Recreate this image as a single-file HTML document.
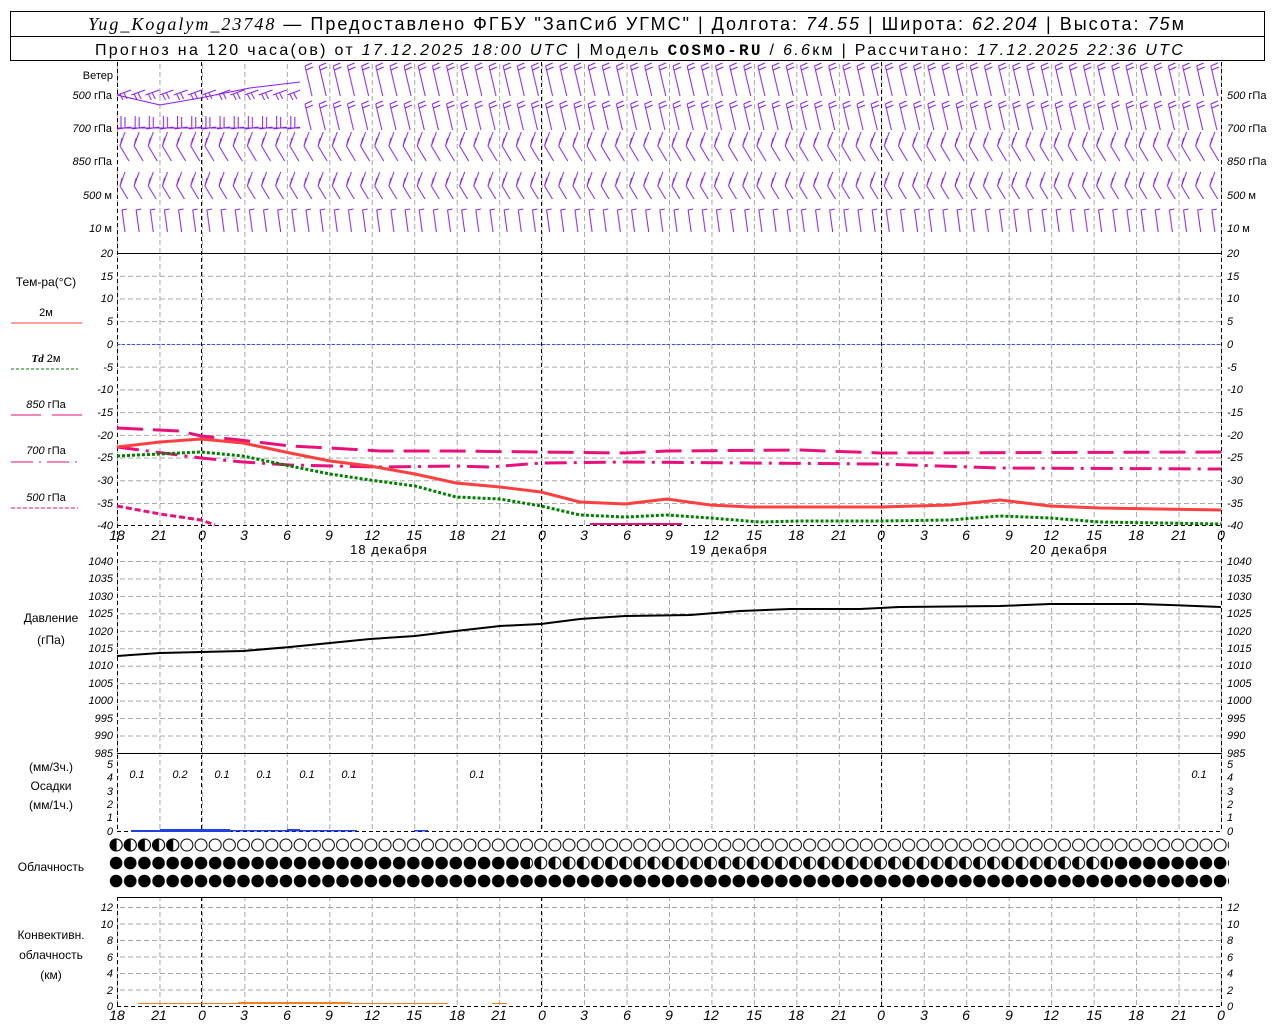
<!DOCTYPE html>
<html><head><meta charset="utf-8"><style>
html,body{margin:0;padding:0;background:#fff;width:1280px;height:1024px;overflow:hidden}
svg{display:block;font-family:"Liberation Sans",sans-serif}
.t{font-size:11px}
.i{font-style:italic;font-size:11px}
</style></head><body>
<svg width="1280" height="1024" viewBox="0 0 1280 1024" xmlns="http://www.w3.org/2000/svg">
<defs>
<pattern id="vg" x="117" y="0" width="42.4615" height="1024" patternUnits="userSpaceOnUse">
<line x1="0.5" y1="0" x2="0.5" y2="1024" stroke="#a8a8a8" stroke-width="1" stroke-dasharray="5 3"/></pattern>
<pattern id="hT" x="0" y="253" width="1280" height="22.73" patternUnits="userSpaceOnUse">
<line x1="0" y1="0.5" x2="1280" y2="0.5" stroke="#a8a8a8" stroke-dasharray="5 3"/></pattern>
<pattern id="hP" x="0" y="561" width="1280" height="17.45" patternUnits="userSpaceOnUse">
<line x1="0" y1="0.5" x2="1280" y2="0.5" stroke="#a8a8a8" stroke-dasharray="5 3"/></pattern>
<pattern id="hC" x="0" y="907" width="1280" height="16.5" patternUnits="userSpaceOnUse">
<line x1="0" y1="0.5" x2="1280" y2="0.5" stroke="#a8a8a8" stroke-dasharray="5 3"/></pattern>
<pattern id="cf" x="109" y="-15" width="14.154" height="30" patternUnits="userSpaceOnUse">
<circle cx="7.1" cy="15" r="6.3" fill="#000"/></pattern>
<pattern id="co" x="109" y="-15" width="14.154" height="30" patternUnits="userSpaceOnUse">
<circle cx="7.1" cy="15" r="6" fill="#fff" stroke="#000" stroke-width="1"/></pattern>
<pattern id="ch" x="109" y="-15" width="14.154" height="30" patternUnits="userSpaceOnUse">
<circle cx="7.1" cy="15" r="6" fill="#fff" stroke="#000" stroke-width="1"/><path d="M7.1 9 A6 6 0 0 0 7.1 21Z" fill="#000"/><line x1="7.1" y1="9" x2="7.1" y2="21" stroke="#000"/></pattern>
<pattern id="bA" x="117" y="62" width="14.154" height="40" patternUnits="userSpaceOnUse">
<g stroke="#8a1cf0" stroke-width="1" fill="none"><path d="M11 34 L4 4 M4 4 L11 1 M5 8 L12 5"/></g></pattern>
<pattern id="bB" x="117" y="128" width="14.154" height="40" patternUnits="userSpaceOnUse">
<g stroke="#8a1cf0" stroke-width="1" fill="none"><path d="M12 33 L3 18 L8 4 M3 18 L5 10"/></g></pattern>
<pattern id="bC" x="117" y="92" width="14.154" height="40" patternUnits="userSpaceOnUse">
<g stroke="#8a1cf0" stroke-width="1" fill="none"><path d="M1 37 L14 35 M4 36 L4 24 M8 36 L8 25"/></g></pattern>
<pattern id="bE" x="117" y="60" width="14.154" height="40" patternUnits="userSpaceOnUse">
<g stroke="#8a1cf0" stroke-width="1" fill="none"><path d="M0 35 L14 30 M3 34 L6 40 M7 33 L10 39"/></g></pattern>
<pattern id="bD" x="117" y="196" width="14.154" height="40" patternUnits="userSpaceOnUse">
<g stroke="#8a1cf0" stroke-width="1" fill="none"><path d="M8 36 L5 14 L10 13"/></g></pattern>
</defs>

<!-- header -->
<rect x="10.5" y="11.5" width="1254" height="49" fill="none" stroke="#000"/>
<line x1="10" y1="36.5" x2="1265" y2="36.5" stroke="#000"/>
<text x="637" y="30" text-anchor="middle" font-size="18" letter-spacing="2"><tspan font-family="Liberation Serif" font-style="italic">Yug_Kogalym_23748</tspan> — Предоставлено ФГБУ "ЗапСиб УГМС" | Долгота: <tspan font-style="italic">74.55</tspan> | Широта: <tspan font-style="italic">62.204</tspan> | Высота: <tspan font-style="italic">75</tspan>м</text>
<text x="640" y="55" text-anchor="middle" font-size="16" letter-spacing="2.3">Прогноз на 120 часа(ов) от <tspan font-style="italic">17.12.2025 18:00 UTC</tspan>  | Модель <tspan font-weight="bold" font-family="Liberation Mono">COSMO-RU</tspan> / <tspan font-style="italic">6.6</tspan>км | Рассчитано: <tspan font-style="italic">17.12.2025 22:36 UTC</tspan></text>

<!-- grids -->
<rect x="117" y="62" width="1105" height="191" fill="url(#vg)"/>
<rect x="117" y="253" width="1105" height="272" fill="url(#vg)"/>
<rect x="117" y="253" width="1105" height="272" fill="url(#hT)"/>
<rect x="117" y="561" width="1105" height="192" fill="url(#vg)"/>
<rect x="117" y="561" width="1105" height="192" fill="url(#hP)"/>
<rect x="117" y="753" width="1105" height="78" fill="url(#vg)"/>
<rect x="117" y="897" width="1105" height="109" fill="url(#vg)"/>
<rect x="117" y="907" width="1105" height="99" fill="url(#hC)"/>
<g stroke="#000" stroke-dasharray="4 3">
<line x1="117.5" y1="62" x2="117.5" y2="831"/><line x1="1221.5" y1="62" x2="1221.5" y2="831"/>
<line x1="117.5" y1="897" x2="117.5" y2="1006"/><line x1="1221.5" y1="897" x2="1221.5" y2="1006"/>
<line x1="201.5" y1="62" x2="201.5" y2="831"/><line x1="541.5" y1="62" x2="541.5" y2="831"/><line x1="881.5" y1="62" x2="881.5" y2="831"/>
<line x1="201.5" y1="897" x2="201.5" y2="1006"/><line x1="541.5" y1="897" x2="541.5" y2="1006"/><line x1="881.5" y1="897" x2="881.5" y2="1006"/>
<line x1="117" y1="525.5" x2="1222" y2="525.5"/><line x1="117" y1="831.5" x2="1222" y2="831.5"/><line x1="117" y1="1006.5" x2="1222" y2="1006.5"/>
</g>
<g stroke="#000"><line x1="117" y1="253.5" x2="1222" y2="253.5"/><line x1="117" y1="753.5" x2="1222" y2="753.5"/><line x1="117" y1="897.5" x2="1222" y2="897.5"/></g>
<line x1="117" y1="344.5" x2="1222" y2="344.5" stroke="#3050ff" stroke-dasharray="3 2"/>

<!-- wind -->
<g font-size="11" text-anchor="end">
<text x="113" y="79">Ветер</text>
<text x="112" y="99"><tspan font-style="italic">500</tspan> гПа</text>
<text x="112" y="132"><tspan font-style="italic">700</tspan> гПа</text>
<text x="112" y="165"><tspan font-style="italic">850</tspan> гПа</text>
<text x="112" y="199"><tspan font-style="italic">500</tspan> м</text>
<text x="112" y="232"><tspan font-style="italic">10</tspan>   м</text>
</g>
<g font-size="11">
<text x="1227" y="99"><tspan font-style="italic">500</tspan> гПа</text>
<text x="1227" y="132"><tspan font-style="italic">700</tspan> гПа</text>
<text x="1227" y="165"><tspan font-style="italic">850</tspan> гПа</text>
<text x="1227" y="199"><tspan font-style="italic">500</tspan> м</text>
<text x="1227" y="232"><tspan font-style="italic">10</tspan>   м</text>
</g>
<rect x="300" y="62" width="922" height="36" fill="url(#bA)"/>
<rect x="300" y="96" width="922" height="36" fill="url(#bA)" transform="translate(0,-2)"/>
<rect x="117" y="80" width="183" height="22" fill="url(#bE)"/>
<rect x="117" y="94" width="183" height="38" fill="url(#bC)"/>
<rect x="117" y="128" width="1105" height="37" fill="url(#bB)"/>
<rect x="117" y="162" width="1105" height="37" fill="url(#bB)"/>
<rect x="117" y="196" width="1105" height="36" fill="url(#bD)"/>
<polyline points="117,95 160,105 200,98 250,88 300,82" fill="none" stroke="#8a1cf0"/>
<polyline points="117,128 300,128" fill="none" stroke="#8a1cf0"/>

<!-- temp labels -->
<g class="i" text-anchor="end">
<text x="113" y="257">20</text><text x="113" y="280">15</text><text x="113" y="302">10</text><text x="113" y="325">5</text><text x="113" y="348">0</text><text x="113" y="371">-5</text><text x="113" y="393">-10</text><text x="113" y="416">-15</text><text x="113" y="439">-20</text><text x="113" y="461">-25</text><text x="113" y="484">-30</text><text x="113" y="507">-35</text><text x="113" y="529">-40</text>
</g>
<g class="i">
<text x="1227" y="257">20</text><text x="1227" y="280">15</text><text x="1227" y="302">10</text><text x="1227" y="325">5</text><text x="1227" y="348">0</text><text x="1227" y="371">-5</text><text x="1227" y="393">-10</text><text x="1227" y="416">-15</text><text x="1227" y="439">-20</text><text x="1227" y="461">-25</text><text x="1227" y="484">-30</text><text x="1227" y="507">-35</text><text x="1227" y="529">-40</text>
</g>
<g font-size="11" text-anchor="middle">
<text x="46" y="286" font-size="12">Тем-ра(°С)</text>
<text x="46" y="316">2м</text>
<text x="46" y="362"><tspan font-style="italic" font-weight="bold" font-family="Liberation Serif">Td</tspan>  2м</text>
<text x="46" y="408"><tspan font-style="italic">850</tspan> гПа</text>
<text x="46" y="454"><tspan font-style="italic">700</tspan> гПа</text>
<text x="46" y="501"><tspan font-style="italic">500</tspan> гПа</text>
</g>
<line x1="11" y1="323" x2="82" y2="323" stroke="#ff4040"/>
<line x1="11" y1="369" x2="78" y2="369" stroke="#008000" stroke-dasharray="3 2"/>
<line x1="11" y1="415" x2="82" y2="415" stroke="#e0107a" stroke-dasharray="30 11"/>
<line x1="11" y1="462" x2="78" y2="462" stroke="#e0107a" stroke-dasharray="22 6 2 6"/>
<line x1="11" y1="508" x2="78" y2="508" stroke="#e0107a" stroke-dasharray="4 2"/>

<g fill="none">
<polyline points="117,428 180,431 201,436 240,440 290,446 330,448 380,451 450,451 541,452 625,453 667,451 800,450 880,453 1221,452" stroke="#e8107a" stroke-width="3" stroke-dasharray="26 10"/>
<polyline points="117,447 201,458 243,462 290,465 380,467 456,466 490,467 541,463 625,462 880,464 1000,468 1221,469" stroke="#e8107a" stroke-width="3" stroke-dasharray="22 7 3 7"/>
<polyline points="117,506 160,514 201,520 215,525" stroke="#e8107a" stroke-width="3" stroke-dasharray="6 3"/>
<line x1="590" y1="524" x2="682" y2="524" stroke="#e8107a" stroke-width="2"/>
<polyline points="117,456 201,452 243,456 290,466 330,474 370,480 415,486 456,497 500,499 541,506 580,515 625,517 667,515 710,518 760,522 800,521 880,521 950,520 1000,516 1050,518 1100,522 1221,524" stroke="#008000" stroke-width="3" stroke-dasharray="3 2"/>
<polyline points="117,447 160,442 201,439 243,443 290,453 330,461 370,466 415,474 456,483 500,487 541,492 580,502 625,504 667,499 710,505 750,507 880,507 950,505 1000,500 1050,506 1100,508 1221,510" stroke="#ff4040" stroke-width="3"/>
</g>

<!-- hour labels -->
<g id="hl" font-size="14" font-style="italic" text-anchor="middle">
<text x="117" y="540">18</text><text x="159" y="540">21</text><text x="202" y="540">0</text><text x="244" y="540">3</text><text x="287" y="540">6</text><text x="329" y="540">9</text><text x="372" y="540">12</text><text x="414" y="540">15</text><text x="457" y="540">18</text><text x="499" y="540">21</text><text x="542" y="540">0</text><text x="584" y="540">3</text><text x="627" y="540">6</text><text x="669" y="540">9</text><text x="711" y="540">12</text><text x="754" y="540">15</text><text x="796" y="540">18</text><text x="839" y="540">21</text><text x="881" y="540">0</text><text x="924" y="540">3</text><text x="966" y="540">6</text><text x="1009" y="540">9</text><text x="1051" y="540">12</text><text x="1094" y="540">15</text><text x="1136" y="540">18</text><text x="1179" y="540">21</text><text x="1221" y="540">0</text>
</g>
<use href="#hl" y="480"/>
<g font-size="13" text-anchor="middle" letter-spacing="1">
<text x="389" y="554">18 декабря</text><text x="729" y="554">19 декабря</text><text x="1069" y="554">20 декабря</text>
</g>

<!-- pressure -->
<g class="i" text-anchor="end" font-size="10">
<text x="113" y="565">1040</text><text x="113" y="582">1035</text><text x="113" y="600">1030</text><text x="113" y="617">1025</text><text x="113" y="635">1020</text><text x="113" y="652">1015</text><text x="113" y="669">1010</text><text x="113" y="687">1005</text><text x="113" y="704">1000</text><text x="113" y="722">995</text><text x="113" y="739">990</text><text x="113" y="757">985</text>
</g>
<g class="i" font-size="10">
<text x="1227" y="565">1040</text><text x="1227" y="582">1035</text><text x="1227" y="600">1030</text><text x="1227" y="617">1025</text><text x="1227" y="635">1020</text><text x="1227" y="652">1015</text><text x="1227" y="669">1010</text><text x="1227" y="687">1005</text><text x="1227" y="704">1000</text><text x="1227" y="722">995</text><text x="1227" y="739">990</text><text x="1227" y="757">985</text>
</g>
<text x="51" y="622" font-size="12" text-anchor="middle">Давление</text>
<text x="51" y="644" font-size="12" text-anchor="middle">(гПа)</text>
<polyline points="117,656 160,653 201,652 243,651 290,647 330,643 370,639 415,636 456,631 500,626 541,624 580,619 625,616 690,615 740,611 790,609 860,609 900,607 1000,606 1050,604 1140,604 1170,605 1221,607" fill="none" stroke="#000" stroke-width="2"/>

<!-- precip -->
<g class="i" text-anchor="end" font-size="10">
<text x="113" y="768">5</text><text x="113" y="781">4</text><text x="113" y="795">3</text><text x="113" y="808">2</text><text x="113" y="821">1</text><text x="113" y="835">0</text></g>
<g class="i" font-size="10">
<text x="1227" y="768">5</text><text x="1227" y="781">4</text><text x="1227" y="795">3</text><text x="1227" y="808">2</text><text x="1227" y="821">1</text><text x="1227" y="835">0</text></g>
<g font-size="12" text-anchor="middle">
<text x="51" y="771">(мм/3ч.)</text><text x="51" y="790">Осадки</text><text x="51" y="809">(мм/1ч.)</text></g>
<g class="i" font-size="13" text-anchor="middle">
<text x="137" y="778">0.1</text><text x="180" y="778">0.2</text><text x="222" y="778">0.1</text><text x="264" y="778">0.1</text><text x="307" y="778">0.1</text><text x="349" y="778">0.1</text><text x="477" y="778">0.1</text><text x="1199" y="778">0.1</text></g>
<rect x="131" y="830" width="100" height="2" fill="#2040e0"/>
<rect x="160" y="829" width="70" height="2" fill="#2040e0"/>
<rect x="231" y="830" width="126" height="1.5" fill="#2040e0"/>
<rect x="287" y="829" width="13" height="2" fill="#2040e0"/>
<rect x="414" y="830" width="14" height="1.5" fill="#2040e0"/>

<!-- clouds -->
<g transform="translate(0,845)">
<rect x="109" y="-8" width="1120" height="16" fill="url(#co)"/>
<rect x="109" y="-8" width="71" height="16" fill="url(#ch)"/>
</g>
<g transform="translate(0,863)">
<rect x="109" y="-8" width="1120" height="16" fill="url(#cf)"/>
<rect x="530" y="-8" width="580" height="16" fill="#fff"/>
<rect x="530" y="-8" width="580" height="16" fill="url(#ch)"/>
</g>
<g transform="translate(0,881)">
<rect x="109" y="-8" width="1120" height="16" fill="url(#cf)"/>
</g>
<text x="51" y="871" font-size="12" text-anchor="middle">Облачность</text>

<!-- convective -->
<g class="i" text-anchor="end" font-size="10">
<text x="113" y="911">12</text><text x="113" y="928">10</text><text x="113" y="944">8</text><text x="113" y="961">6</text><text x="113" y="977">4</text><text x="113" y="994">2</text><text x="113" y="1010">0</text></g>
<g class="i" font-size="10">
<text x="1227" y="911">12</text><text x="1227" y="928">10</text><text x="1227" y="944">8</text><text x="1227" y="961">6</text><text x="1227" y="977">4</text><text x="1227" y="994">2</text><text x="1227" y="1010">0</text></g>
<g font-size="12" text-anchor="middle">
<text x="51" y="939">Конвективн.</text><text x="51" y="959">облачность</text><text x="51" y="979">(км)</text></g>
<rect x="138" y="1003" width="310" height="1" fill="#f08020"/>
<rect x="238" y="1002" width="112" height="2" fill="#f08020"/>
<rect x="492" y="1003" width="15" height="1" fill="#f08020"/>
</svg>
</body></html>
